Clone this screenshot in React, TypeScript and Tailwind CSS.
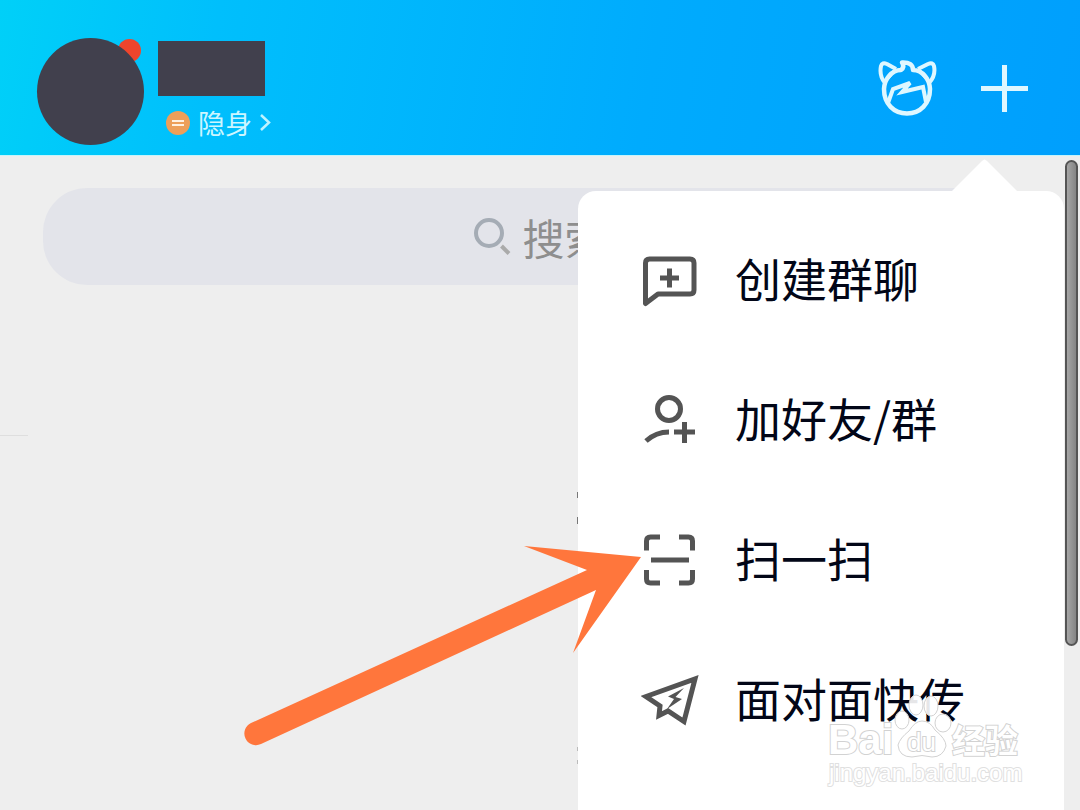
import type { ReactNode } from "react";

const menuItems: { label: string; icon: ReactNode }[] = [
  {
    label: "创建群聊",
    icon: (
      <svg className="w-[58px] h-[58px]" viewBox="0 0 58 58" fill="none" stroke="#545454" strokeWidth="5" aria-hidden="true">
        <path d="M4.500 51.500V11q0-4 4-4H49q4 0 4 4V38q0 4-4 4H17Z" strokeLinejoin="round" />
        <path d="M19 26H38M28.500 16.500V35.500" />
      </svg>
    ),
  },
  {
    label: "加好友/群",
    icon: (
      <svg className="w-[58px] h-[58px]" viewBox="0 0 58 58" fill="none" stroke="#545454" strokeWidth="5" aria-hidden="true">
        <circle cx="28" cy="17" r="11.500" />
        <path d="M5 49Q15 40 28 40" />
        <path d="M33 40H54M43.500 30V51" />
      </svg>
    ),
  },
  {
    label: "扫一扫",
    icon: (
      <svg className="w-[58px] h-[58px]" viewBox="0 0 58 58" fill="none" stroke="#545454" strokeWidth="5" aria-hidden="true">
        <path d="M5.500 18.500V9q0-4 4-4H19M38 5H47.500q4 0 4 4V18.500M51.500 38V47q0 4-4 4H38M19 51H9.500q-4 0-4-4V38" />
        <path d="M10 28H48" />
      </svg>
    ),
  },
  {
    label: "面对面快传",
    icon: (
      <svg className="w-[58px] h-[58px]" viewBox="0 0 58 58" fill="none" stroke="#545454" strokeWidth="5" aria-hidden="true">
        <path d="M5 24.500L54 7L43 49.500L27 39L18 43.500L19 34Z" />
        <path d="M43 16L27 24.500L33 27L26 37L41 27L34.500 25Z" fill="#545454" stroke="none" />
      </svg>
    ),
  },
];

function CatIcon() {
  return (
    <svg className="w-[60px] h-[60px]" viewBox="0 0 60 60" fill="none" stroke="#dff7ff" strokeWidth="4.500" strokeLinejoin="round" aria-hidden="true">
      <path d="M24 12Q17 12 12 18Q7.500 23 7 31C7 46 17 55.500 30 55.500S53 46 53 31Q52.500 23 48 18Q43 12 36 12Q36 4 25 4.500Q28 9 24 12Z" />
      <path d="M8 25Q2 18 4 8Q5 4 10 6L19 11M52 25Q59 18 57 8Q56 4 51 6L41 11" strokeWidth="4" />
      <path d="M8 24L17 13M52 24L43 13" strokeWidth="3" />
      <path d="M11 45L16 31L33 25L25 34L46 29L49 44" strokeWidth="4" strokeLinejoin="miter" />
    </svg>
  );
}

function Watermark() {
  return (
    <div className="absolute left-[828px] top-[540px] pointer-events-none" aria-hidden="true">
      <svg className="w-[200px] h-[94px] overflow-visible" viewBox="0 0 200 94" fill="#fff" stroke="#d2d2d2" strokeWidth="1">
        <g fillOpacity="0.9">
          <ellipse cx="74" cy="24" rx="7" ry="9" />
          <ellipse cx="88" cy="9" rx="7" ry="10" />
          <ellipse cx="103" cy="10" rx="7" ry="10" />
          <ellipse cx="115" cy="27" rx="8" ry="9" />
          <path d="M94 25Q102 25 107 34Q118 43 118 50Q115 61 104 61Q94 58 84 61Q71 61 70 49Q72 42 81 35Q87 25 94 25Z" />
        </g>
        <text x="0" y="58" fontSize="42" fontWeight="700" fontFamily="Liberation Sans, sans-serif" strokeWidth="2" paintOrder="stroke">Bai</text>
        <text x="79" y="55" fontSize="26" fontWeight="400" fontFamily="Liberation Sans, sans-serif" strokeWidth="2" paintOrder="stroke">du</text>
        <text x="124" y="57" fontSize="33" fontWeight="700" fontFamily="Noto Sans CJK SC, sans-serif" strokeWidth="2" paintOrder="stroke">经验</text>
        <text x="1" y="85" fontSize="24" fontFamily="Liberation Sans, sans-serif" stroke="#e0e0e0" strokeWidth="2" paintOrder="stroke">jingyan.baidu.com</text>
      </svg>
    </div>
  );
}

export default function App() {
  return (
    <div className="min-h-screen flex flex-col overflow-hidden bg-[#eeeeee] font-['Noto_Sans_CJK_SC',sans-serif]">
      <header className="flex justify-between items-start h-[156px] pl-[37px] pr-[52px] pt-[38px] border-b border-[#c5f4fb] bg-linear-[100deg,#00d0f8_0%,#00bffc_20%,#00abfd_60%,#009ffd_100%]">
        <div className="flex gap-[14px]">
          <div className="relative size-[107px]">
            <span className="absolute right-[3px] top-px size-[23px] rounded-full bg-[#ee452c]" />
            <div className="relative size-full rounded-full bg-[#41404d]" />
          </div>
          <div className="pt-[3px]">
            <div className="w-[107px] h-[55px] bg-[#41404d]" />
            <button type="button" className="flex items-center mt-3 pl-2 text-[27px] leading-[30px] text-[#cdf6ff]">
              <span className="flex flex-col items-center justify-center gap-[2px] size-6 mr-2 rounded-full bg-[#ed9f59]">
                <span className="w-3 h-[2px] bg-[#fff0df]" />
                <span className="w-3 h-[2px] bg-[#fff0df]" />
              </span>
              隐身
              <svg className="w-3 h-5 ml-[7px]" viewBox="0 0 12 20" fill="none" stroke="#bdf3ff" strokeWidth="2.500" aria-hidden="true">
                <path d="M2 2L10 9.500L2 17" />
              </svg>
            </button>
          </div>
        </div>
        <div className="flex items-center gap-11 h-[100px]">
          <button type="button" aria-label="小世界">
            <CatIcon />
          </button>
          <button type="button" aria-label="更多">
            <svg className="w-[47px] h-[47px]" viewBox="0 0 47 47" stroke="#dff7ff" strokeWidth="5" aria-hidden="true">
              <path d="M0 23.500H47M23.500 0V47" />
            </svg>
          </button>
        </div>
      </header>

      <main className="relative flex-1 pt-8">
        <label className="flex items-center justify-center gap-3 h-[97px] mx-[43px] rounded-[44px] bg-[#e3e4ea]">
          <svg className="w-[37px] h-[37px]" viewBox="0 0 37 37" fill="none" stroke="#a5acb5" strokeWidth="4" aria-hidden="true">
            <circle cx="15" cy="15" r="13" />
            <path d="M27.500 28L35 35.500" stroke="#aaa" />
          </svg>
          <input
            type="search"
            aria-label="搜索"
            placeholder="搜索"
            className="w-[84px] h-[60px] text-[42px] leading-[60px] bg-transparent outline-none placeholder:text-[#8e8e8e]"
          />
        </label>
        <div className="w-7 h-px mt-[150px] bg-[#dedede]" />

        {/* edges of the list content behind the popup */}
        <span className="absolute left-[577px] top-[336px] w-px h-[6px] bg-[#777]" />
        <span className="absolute left-[577px] top-[361px] w-px h-[7px] bg-[#777]" />
        <span className="absolute left-[577px] top-[591px] w-px h-1 bg-[#bbb]" />
        <span className="absolute left-[577px] top-[604px] w-px h-1 bg-[#bbb]" />

        <nav className="absolute left-[578px] right-4 top-[35px] bottom-0 pt-5 rounded-t-[18px] bg-white">
          <svg className="absolute right-[46px] -top-8 w-[67px] h-[33px]" viewBox="0 0 67 33" fill="#fff" aria-hidden="true">
            <path d="M0 33L31 2Q33.500 -1 36 2L67 33Z" />
          </svg>
          <ul>
            {menuItems.map((item) => (
              <li key={item.label}>
                <button type="button" className="flex items-center gap-9 w-full h-[140px] pl-[63px] text-[46px] leading-[60px] text-[#020617] whitespace-nowrap">
                  {item.icon}
                  <span className="pb-2">{item.label}</span>
                </button>
              </li>
            ))}
          </ul>
        </nav>

        {/* scrollbar thumb */}
        <div className="absolute right-[2px] top-1 w-[13px] h-[486px] rounded-full border-2 border-[#555] bg-linear-to-r from-[#a6a6a6] to-[#858585]" />

        <svg className="absolute left-[240px] top-[384px] w-[410px] h-[210px] pointer-events-none" viewBox="240 540 410 210" fill="#ff763c" aria-hidden="true">
          <path d="M641 557L524 546L587 570L251 723A11.500 11.500 0 0 0 261 744L596 590L573 653Z" />
        </svg>

        <Watermark />
      </main>
    </div>
  );
}
